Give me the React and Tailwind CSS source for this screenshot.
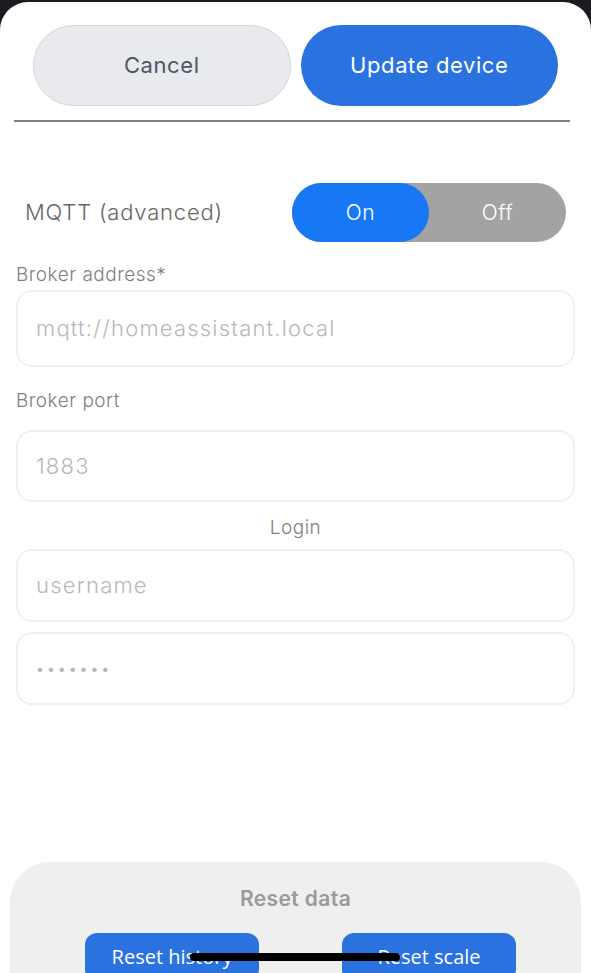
const FIELDS_FONT = { fontFamily: 'Inter, "Noto Sans", sans-serif' }

function Field({ placeholder, height, small }) {
  return (
    <div
      className={`mx-[16px] flex items-center rounded-[16px] border-2 border-[#f0f0f0] bg-white pl-[18px] ${height}`}
    >
      <span
        className={
          small
            ? 'text-[14px] tracking-[3px] text-[#b5b5b5]'
            : 'text-[22px] font-light tracking-[1.2px] text-[#b8b8b8]'
        }
      >
        {placeholder}
      </span>
    </div>
  )
}

export default function App() {
  return (
    <div className="h-[973px] w-[591px] overflow-hidden bg-[#1b1c20] pt-[2px]" style={FIELDS_FONT}>
      <div className="relative h-[971px] rounded-t-[28px] bg-white">
        {/* Top actions */}
        <div className="flex gap-[10px] px-[33px] pt-[23px]">
          <button className="h-[81px] w-[258px] rounded-full border border-[#d3d5d9] bg-[#e9eaee] text-[22px] tracking-[0.6px] text-[#4e5564]">
            Cancel
          </button>
          <button className="h-[81px] w-[258px] rounded-full bg-[#2a72e0] text-[22px] tracking-[0.6px] text-white">
            Update device
          </button>
        </div>
        <div className="ml-[14px] mt-[14px] h-[2px] w-[556px] bg-[#76868c]" />

        {/* MQTT toggle */}
        <div className="mt-[61px] flex items-center justify-between pl-[25px] pr-[25px]">
          <span className="text-[22px] font-light tracking-[0.8px] text-[#666]">MQTT (advanced)</span>
          <div className="flex h-[59px] w-[274px] rounded-full bg-[#a3a3a3] text-[21px] font-light tracking-[0.5px] text-white">
            <div className="flex w-[137px] items-center justify-center rounded-full bg-[#1877f2]">On</div>
            <div className="flex flex-1 items-center justify-center">Off</div>
          </div>
        </div>

        {/* Broker */}
        <div className="ml-[16px] mt-[22px] text-[19px] font-light leading-[22px] tracking-[0.5px] text-[#808080]">Broker address*</div>
        <div className="mt-[4px]">
          <Field placeholder="mqtt://homeassistant.local" height="h-[77px]" />
        </div>
        <div className="ml-[16px] mt-[23px] text-[19px] font-light leading-[22px] tracking-[0.5px] text-[#808080]">Broker port</div>
        <div className="mt-[18px]">
          <Field placeholder="1883" height="h-[72px]" />
        </div>

        {/* Login */}
        <div className="mt-[15px] text-center text-[19px] font-light leading-[22px] tracking-[0.5px] text-[#808080]">Login</div>
        <div className="mt-[10px]">
          <Field placeholder="username" height="h-[73px]" />
        </div>
        <div className="mt-[10px]">
          <Field placeholder="•••••••" height="h-[73px]" small />
        </div>

        {/* Reset data */}
        <div className="mx-[10px] mt-[157px] h-[120px] rounded-t-[40px] bg-[#efefef] pt-[24px]">
          <div className="text-center text-[21px] font-semibold leading-[26px] tracking-[0.4px] text-[#9a9a9a]">Reset data</div>
          <div className="mt-[21px] flex gap-[83px] pl-[75px]" style={{ fontFamily: '"Open Sans", sans-serif' }}>
            <button className="h-[48px] w-[174px] rounded-[12px] bg-[#2a72e0] text-[20px] text-white">Reset history</button>
            <button className="h-[48px] w-[174px] rounded-[12px] bg-[#2a72e0] text-[20px] text-white">Reset scale</button>
          </div>
        </div>

        {/* iOS home indicator */}
        <div className="absolute left-[190px] top-[951px] h-[8px] w-[210px] rounded-full bg-black" />
      </div>
    </div>
  )
}
